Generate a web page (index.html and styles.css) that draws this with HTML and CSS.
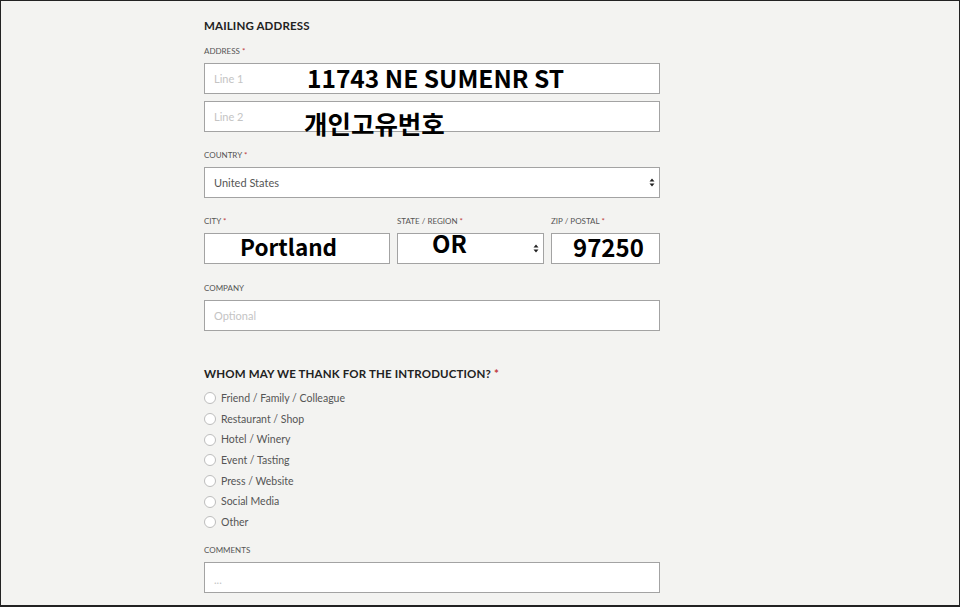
FILE: index.html
```html
<!DOCTYPE html>
<html lang="en">
<head>
    <meta charset="UTF-8">
    <meta name="viewport" content="width=device-width, initial-scale=1.0">
    <title>Mailing Address</title>
    <link rel="stylesheet" href="styles.css">
</head>
<body>

<div class="page">
    <form class="form">
        <h2 class="section-title">Mailing Address</h2>

        <div class="field">
            <label class="field-label">Address <span class="req">*</span></label>
            <div class="overlay-wrap">
                <input type="text" class="text-input" placeholder="Line 1">
                <span class="note note-line1">11743 NE SUMENR ST</span>
            </div>
            <div class="overlay-wrap line2">
                <input type="text" class="text-input" placeholder="Line 2">
                <span class="note note-line2">개인고유번호</span>
            </div>
        </div>

        <div class="field">
            <label class="field-label">Country <span class="req">*</span></label>
            <div class="select-wrap">
                <select class="text-input select-input">
                    <option>United States</option>
                </select>
                <svg class="select-arrows" width="6" height="9" viewBox="0 0 6 9"><path d="M3 0.5 L5.5 3.5 H0.5 Z M3 8.5 L5.5 5.5 H0.5 Z" fill="#222"/></svg>
            </div>
        </div>

        <div class="field field-row">
            <div class="col col-city">
                <label class="field-label">City <span class="req">*</span></label>
                <div class="overlay-wrap">
                    <input type="text" class="text-input">
                    <span class="note note-city">Portland</span>
                </div>
            </div>
            <div class="col col-state">
                <label class="field-label">State / Region <span class="req">*</span></label>
                <div class="select-wrap">
                    <select class="text-input select-input">
                        <option></option>
                    </select>
                    <svg class="select-arrows" width="6" height="9" viewBox="0 0 6 9"><path d="M3 0.5 L5.5 3.5 H0.5 Z M3 8.5 L5.5 5.5 H0.5 Z" fill="#222"/></svg>
                    <span class="note note-state">OR</span>
                </div>
            </div>
            <div class="col col-zip">
                <label class="field-label">Zip / Postal <span class="req">*</span></label>
                <div class="overlay-wrap">
                    <input type="text" class="text-input">
                    <span class="note note-zip">97250</span>
                </div>
            </div>
        </div>

        <div class="field">
            <label class="field-label">Company</label>
            <input type="text" class="text-input" placeholder="Optional">
        </div>

        <h2 class="section-title question">Whom may we thank for the introduction? <span class="req">*</span></h2>
        <ul class="radio-list">
            <li><label><input type="radio" name="intro"> Friend / Family / Colleague</label></li>
            <li><label><input type="radio" name="intro"> Restaurant / Shop</label></li>
            <li><label><input type="radio" name="intro"> Hotel / Winery</label></li>
            <li><label><input type="radio" name="intro"> Event / Tasting</label></li>
            <li><label><input type="radio" name="intro"> Press / Website</label></li>
            <li><label><input type="radio" name="intro"> Social Media</label></li>
            <li><label><input type="radio" name="intro"> Other</label></li>
        </ul>

        <div class="field comments">
            <label class="field-label">Comments</label>
            <textarea class="text-input comment-box" placeholder="..."></textarea>
        </div>
    </form>
</div>

</body>
</html>
```

FILE: styles.css
```css
html, body {
    margin: 0;
    padding: 0;
}

body {
    font-family: Lato, "Liberation Sans", sans-serif;
    color: #444;
}

.page {
    height: 607px;
    box-sizing: border-box;
    border: 1px solid #222;
    border-bottom-width: 2px;
    background-color: #f3f3f1;
    overflow: hidden;
}

.form {
    width: 456px;
    margin-left: 203px;
    padding-top: 18px;
}

.section-title {
    margin: 0 0 12px;
    font-size: 11.5px;
    line-height: 14px;
    font-weight: 700;
    letter-spacing: 0.15px;
    text-transform: uppercase;
    color: #222;
}

.section-title.question {
    margin-top: 36px;
    margin-bottom: 7px;
}

.req {
    color: #c0393b;
}

.field {
    margin-bottom: 17px;
}

.field-label {
    display: block;
    height: 12px;
    line-height: 12px;
    margin-bottom: 6px;
    font-size: 8px;
    text-transform: uppercase;
    color: #555;
}

.text-input {
    display: block;
    width: 100%;
    height: 31px;
    box-sizing: border-box;
    padding: 0 9px;
    border: 1px solid #a3a3a3;
    border-radius: 0;
    background-color: #fff;
    font-family: Lato, "Liberation Sans", sans-serif;
    font-size: 11px;
    color: #555;
    outline: none;
}

.text-input::placeholder {
    color: #c4c4c4;
}

.overlay-wrap, .select-wrap {
    position: relative;
}

.overlay-wrap.line2 {
    margin-top: 7px;
}

.select-input {
    appearance: none;
    -webkit-appearance: none;
}

.select-arrows {
    position: absolute;
    right: 5px;
    top: 11px;
}

.field-row {
    display: flex;
    gap: 7px;
    margin-bottom: 18px;
}

.col-city {
    width: 186px;
}

.col-state {
    width: 147px;
}

.col-zip {
    flex: 1;
}

.note {
    position: absolute;
    top: 0;
    font-family: "Noto Sans CJK KR", "Noto Sans", sans-serif;
    font-weight: 700;
    font-size: 22px;
    line-height: 31px;
    color: #000;
    pointer-events: none;
    white-space: nowrap;
}

.note-line1 {
    left: 103px;
    font-size: 24.5px;
    top: -1px;
}

.note-line2 {
    left: 100px;
    top: 6px;
    font-size: 25.5px;
}

.note-city {
    left: 36px;
    font-size: 22.5px;
    top: -2px;
}

.note-state {
    left: 35px;
    top: -6px;
    font-size: 24px;
}

.note-zip {
    left: 22px;
    font-size: 24px;
    top: -2px;
}

.radio-list {
    list-style: none;
    margin: 0;
    padding: 0;
}

.radio-list li {
    height: 20.7px;
    line-height: 20.7px;
    font-size: 10.5px;
    color: #555;
}

.radio-list label {
    display: flex;
    align-items: center;
}

.radio-list input {
    appearance: none;
    -webkit-appearance: none;
    width: 12px;
    height: 12px;
    margin: 0 5px 0 0;
    border: 1px solid #bdbdbd;
    border-radius: 50%;
    background-color: #fff;
}

.comments {
    margin-top: 11px;
}

.comment-box {
    height: 31px;
    padding-top: 10px;
    resize: none;
}
```
